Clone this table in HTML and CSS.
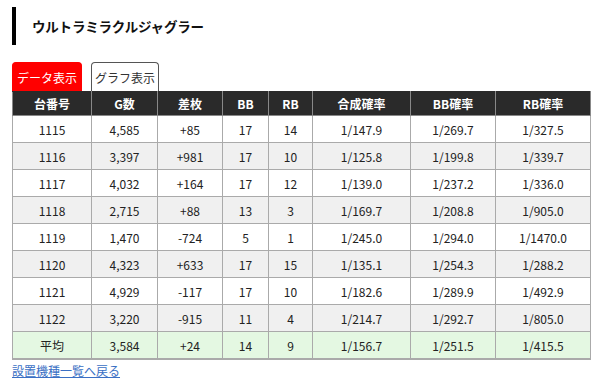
FILE: index.html
```html
<!DOCTYPE html>
<html lang="ja">
<head>
<meta charset="utf-8">
<link rel="stylesheet" href="styles.css">
</head>
<body>
<div class="page">
  <h2 class="title">ウルトラミラクルジャグラー</h2>
  <div class="tabs">
    <span class="tab active">データ表示</span>
    <span class="tab">グラフ表示</span>
  </div>
  <table class="data">
    <colgroup>
      <col class="c1"><col class="c2"><col class="c3"><col class="c4"><col class="c5"><col class="c6"><col class="c7"><col class="c8">
    </colgroup>
    <thead>
      <tr><th>台番号</th><th>G数</th><th>差枚</th><th>BB</th><th>RB</th><th>合成確率</th><th>BB確率</th><th>RB確率</th></tr>
    </thead>
    <tbody>
      <tr><td>1115</td><td>4,585</td><td>+85</td><td>17</td><td>14</td><td>1/147.9</td><td>1/269.7</td><td>1/327.5</td></tr>
      <tr><td>1116</td><td>3,397</td><td>+981</td><td>17</td><td>10</td><td>1/125.8</td><td>1/199.8</td><td>1/339.7</td></tr>
      <tr><td>1117</td><td>4,032</td><td>+164</td><td>17</td><td>12</td><td>1/139.0</td><td>1/237.2</td><td>1/336.0</td></tr>
      <tr><td>1118</td><td>2,715</td><td>+88</td><td>13</td><td>3</td><td>1/169.7</td><td>1/208.8</td><td>1/905.0</td></tr>
      <tr><td>1119</td><td>1,470</td><td>-724</td><td>5</td><td>1</td><td>1/245.0</td><td>1/294.0</td><td>1/1470.0</td></tr>
      <tr><td>1120</td><td>4,323</td><td>+633</td><td>17</td><td>15</td><td>1/135.1</td><td>1/254.3</td><td>1/288.2</td></tr>
      <tr><td>1121</td><td>4,929</td><td>-117</td><td>17</td><td>10</td><td>1/182.6</td><td>1/289.9</td><td>1/492.9</td></tr>
      <tr><td>1122</td><td>3,220</td><td>-915</td><td>11</td><td>4</td><td>1/214.7</td><td>1/292.7</td><td>1/805.0</td></tr>
      <tr class="avg"><td>平均</td><td>3,584</td><td>+24</td><td>14</td><td>9</td><td>1/156.7</td><td>1/251.5</td><td>1/415.5</td></tr>
    </tbody>
  </table>
  <a class="back" href="#">設置機種一覧へ戻る</a>
</div>
</body>
</html>
```

FILE: styles.css
```css
html, body {
  margin: 0;
  padding: 0;
  background: #fff;
}
.page {
  padding: 7px 10px 0 12px;
  font-family: "Noto Sans CJK JP", "Noto Sans", sans-serif;
  color: #222;
}
.title {
  margin: 0;
  height: 38px;
  border-left: 4px solid #000;
  padding-left: 16px;
  display: flex;
  align-items: center;
  font-size: 13.5px;
  letter-spacing: -0.2px;
  font-weight: bold;
  color: #111;
}
.tabs {
  display: flex;
  gap: 9px;
  margin-top: 17px;
  height: 29px;
}
.tab {
  width: 66px;
  height: 28px;
  border: 1px solid #555;
  border-bottom: none;
  border-radius: 4px 4px 0 0;
  display: flex;
  align-items: center;
  justify-content: center;
  font-size: 12px;
  color: #333;
  background: #fff;
}
.tab.active {
  background: #ff0000;
  border-color: #ff0000;
  color: #fff;
  width: 68px;
}
.data {
  width: 578px;
  border-collapse: collapse;
  table-layout: fixed;
  font-size: 12px;
  border: 1px solid #999;
  border-bottom: 2px solid #aaa;
}
.c1 { width: 79px; }
.c2 { width: 66px; }
.c3 { width: 65px; }
.c4 { width: 46px; }
.c5 { width: 44px; }
.c6 { width: 98px; }
.c7 { width: 85px; }
.c8 { width: 95px; }
.data th {
  background: #2a2a2a;
  color: #fff;
  font-weight: bold;
  height: 23px;
  padding: 0;
  border: 1px solid #888;
  border-top-color: #2a2a2a;
  text-align: center;
}
.data td {
  height: 26px;
  padding: 0;
  border: 1px solid #aaa;
  text-align: center;
  color: #222;
}
.data tbody tr:nth-child(even) td {
  background: #f0f0f0;
}
.data tr.avg td {
  background: #e4f8e2;
}
.back {
  display: block;
  width: max-content;
  margin-top: 3px;
  line-height: 16px;
  font-size: 12px;
  color: #3a6fc4;
  text-decoration: underline;
}
```
